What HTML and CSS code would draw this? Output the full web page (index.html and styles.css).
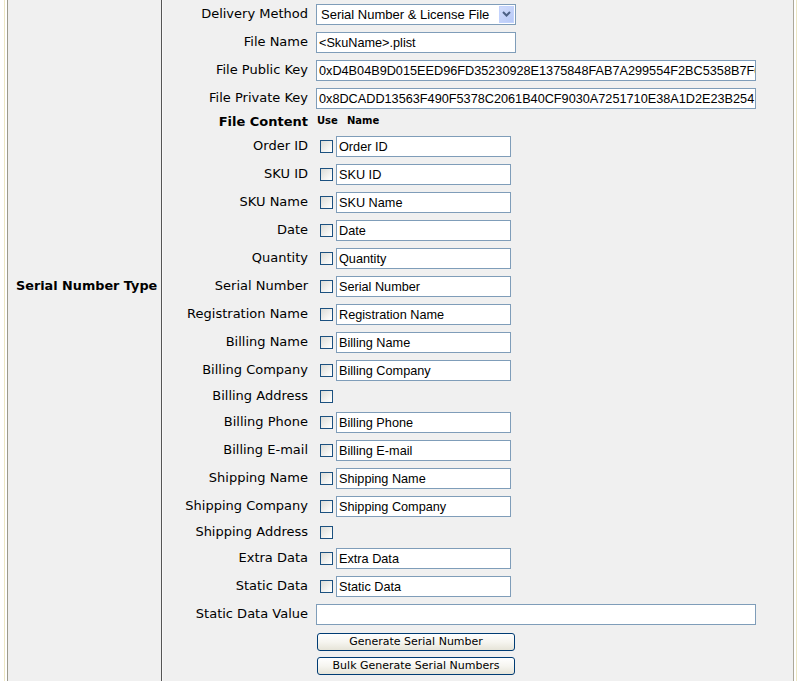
FILE: index.html
```html
<!DOCTYPE html>
<html>
<head>
<meta charset="utf-8">
<link rel="stylesheet" href="styles.css">
</head>
<body>
<div class="frame">
  <div class="panel">
    <div class="side">Serial Number Type</div>
    <div class="main">
      <div class="row"><div class="lbl">Delivery Method</div><div class="select"><span class="sel-text">Serial Number &amp; License File</span><span class="arrow"><svg width="9" height="6" viewBox="0 0 9 6"><path d="M1 1 L4.5 4.5 L8 1" fill="none" stroke="#4d6185" stroke-width="2"/></svg></span></div></div>
      <div class="row"><div class="lbl">File Name</div><div class="inp w200">&lt;SkuName&gt;.plist</div></div>
      <div class="row"><div class="lbl">File Public Key</div><div class="inp w440">0xD4B04B9D015EED96FD35230928E1375848FAB7A299554F2BC5358B7F0C1</div></div>
      <div class="row"><div class="lbl">File Private Key</div><div class="inp w440">0x8DCADD13563F490F5378C2061B40CF9030A7251710E38A1D2E23B254</div></div>
      <div class="row head"><div class="lbl bold">File Content</div><div class="hdr-use">Use</div><div class="hdr-name">Name</div></div>
      <div class="row"><div class="lbl">Order ID</div><div class="cbcell"><span class="cb"></span></div><div class="inp w175">Order ID</div></div>
      <div class="row"><div class="lbl">SKU ID</div><div class="cbcell"><span class="cb"></span></div><div class="inp w175">SKU ID</div></div>
      <div class="row"><div class="lbl">SKU Name</div><div class="cbcell"><span class="cb"></span></div><div class="inp w175">SKU Name</div></div>
      <div class="row"><div class="lbl">Date</div><div class="cbcell"><span class="cb"></span></div><div class="inp w175">Date</div></div>
      <div class="row"><div class="lbl">Quantity</div><div class="cbcell"><span class="cb"></span></div><div class="inp w175">Quantity</div></div>
      <div class="row"><div class="lbl">Serial Number</div><div class="cbcell"><span class="cb"></span></div><div class="inp w175">Serial Number</div></div>
      <div class="row"><div class="lbl">Registration Name</div><div class="cbcell"><span class="cb"></span></div><div class="inp w175">Registration Name</div></div>
      <div class="row"><div class="lbl">Billing Name</div><div class="cbcell"><span class="cb"></span></div><div class="inp w175">Billing Name</div></div>
      <div class="row"><div class="lbl">Billing Company</div><div class="cbcell"><span class="cb"></span></div><div class="inp w175">Billing Company</div></div>
      <div class="row short"><div class="lbl">Billing Address</div><div class="cbcell"><span class="cb"></span></div></div>
      <div class="row"><div class="lbl">Billing Phone</div><div class="cbcell"><span class="cb"></span></div><div class="inp w175">Billing Phone</div></div>
      <div class="row"><div class="lbl">Billing E-mail</div><div class="cbcell"><span class="cb"></span></div><div class="inp w175">Billing E-mail</div></div>
      <div class="row"><div class="lbl">Shipping Name</div><div class="cbcell"><span class="cb"></span></div><div class="inp w175">Shipping Name</div></div>
      <div class="row"><div class="lbl">Shipping Company</div><div class="cbcell"><span class="cb"></span></div><div class="inp w175">Shipping Company</div></div>
      <div class="row short"><div class="lbl">Shipping Address</div><div class="cbcell"><span class="cb"></span></div></div>
      <div class="row"><div class="lbl">Extra Data</div><div class="cbcell"><span class="cb"></span></div><div class="inp w175">Extra Data</div></div>
      <div class="row"><div class="lbl">Static Data</div><div class="cbcell"><span class="cb"></span></div><div class="inp w175">Static Data</div></div>
      <div class="row"><div class="lbl">Static Data Value</div><div class="inp w440"></div></div>
      <div class="row btnrow1"><div class="lbl"></div><div class="btn">Generate Serial Number</div></div>
      <div class="row btnrow2"><div class="lbl"></div><div class="btn">Bulk Generate Serial Numbers</div></div>
    </div>
  </div>
</div>
</body>
</html>
```

FILE: styles.css
```css
html, body {
  margin: 0;
  padding: 0;
  background: #ffffff;
  overflow: hidden;
}
body {
  width: 800px;
  height: 681px;
}
.frame {
  margin: 0 3px 0 4px;
  border-left: 1px solid #ece6c4;
  border-right: 1px solid #ece6c4;
  padding: 0 2px;
  height: 700px;
}
.panel {
  display: flex;
  height: 100%;
  background: #f0f0f0;
  border-left: 1px solid #9c9a8c;
  border-right: 1px solid #aca899;
}
.side {
  flex: none;
  border-right: 1px solid #555555;
  box-sizing: content-box;
  padding: 278px 0 0 8px;
  width: 145px;
  font-family: "DejaVu Sans", sans-serif;
  font-weight: bold;
  font-size: 12.8px;
  line-height: 16px;
  color: #000;
  white-space: nowrap;
}
.main {
  flex: 1;
  border-left: 1px solid #f8f8f8;
  font-family: "DejaVu Sans", sans-serif;
  font-size: 13px;
  color: #000;
}
.row {
  display: flex;
  align-items: center;
  height: 28px;
}
.row.head {
  height: 20px;
}
.row.short {
  height: 24px;
}
.row.btnrow1 {
  height: 28px;
}
.row.btnrow2 {
  height: 20px;
}
.lbl {
  width: 153px;
  flex: none;
  box-sizing: border-box;
  padding-right: 8px;
  text-align: right;
  white-space: nowrap;
  line-height: 16px;
  margin-top: -1px;
}
.bold {
  font-weight: bold;
}
.hdr-use, .hdr-name {
  font-family: "DejaVu Sans", sans-serif;
  font-weight: bold;
  font-size: 10px;
  line-height: 12px;
  margin-top: -2px;
}
.hdr-use {
  width: 30px;
  padding-left: 1px;
}
.cbcell {
  width: 20px;
  flex: none;
  display: flex;
  align-items: center;
}
.cb {
  display: block;
  width: 11px;
  height: 11px;
  margin-left: 4px;
  border: 1px solid #1c5180;
  background: linear-gradient(135deg, #dcdcd7 0%, #f6f6f4 70%, #ffffff 100%);
}
.inp {
  box-sizing: border-box;
  height: 21px;
  border: 1px solid #7f9db9;
  background: #ffffff;
  font-family: "Liberation Sans", Arial, sans-serif;
  font-size: 12.7px;
  line-height: 19px;
  padding: 1px 0 0 2px;
  white-space: nowrap;
  overflow: hidden;
}
.w200 { width: 200px; }
.w440 { width: 440px; }
.w175 { width: 175px; }
.select {
  box-sizing: border-box;
  width: 200px;
  height: 21px;
  border: 1px solid #7f9db9;
  background: #ffffff;
  display: flex;
  align-items: center;
  justify-content: space-between;
  font-family: "Liberation Sans", Arial, sans-serif;
  font-size: 13px;
  padding-left: 4px;
  padding-right: 1px;
}
.arrow {
  width: 15px;
  height: 17px;
  box-sizing: border-box;
  background: linear-gradient(135deg, #d1dcfb 0%, #b7c9f7 100%);
  border: 1px solid #c3d3fd;
  display: flex;
  align-items: center;
  justify-content: center;
}
.btn {
  box-sizing: border-box;
  width: 198px;
  height: 18px;
  margin-left: 1px;
  border: 1px solid #003c74;
  border-radius: 3px;
  background: linear-gradient(#ffffff 0%, #f6f5f0 50%, #e6e4d8 100%);
  font-family: "DejaVu Sans", sans-serif;
  font-size: 11px;
  line-height: 16px;
  text-align: center;
  color: #000;
  white-space: nowrap;
}
```
